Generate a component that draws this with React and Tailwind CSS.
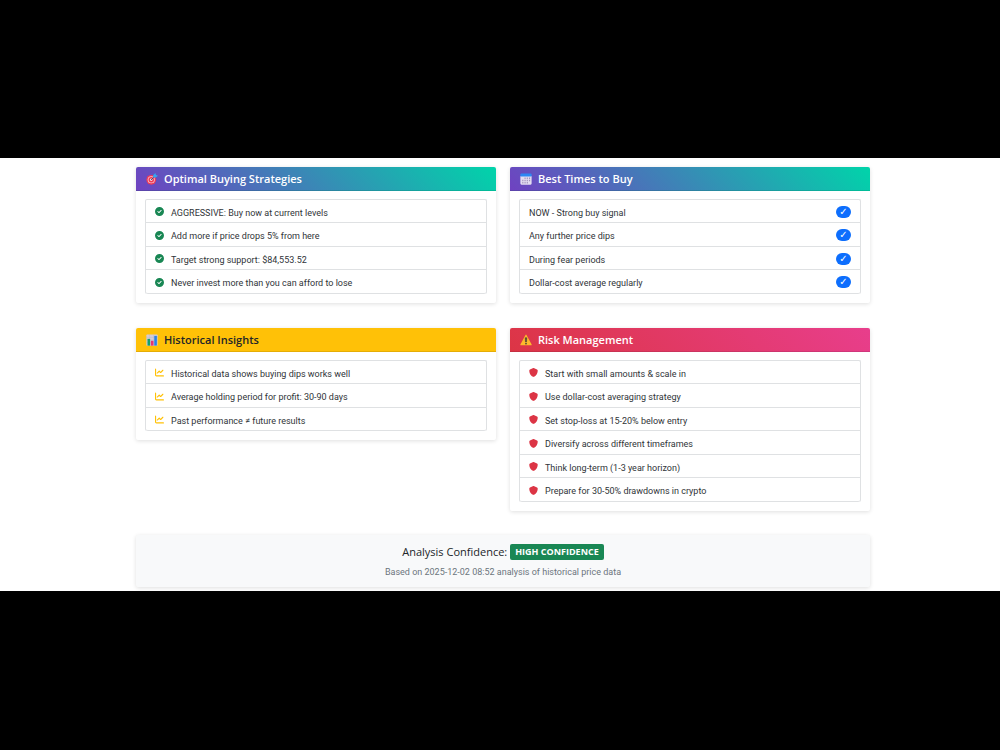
import React from "react";
import { FaCircleCheck, FaChartLine, FaShield } from "react-icons/fa6";

function TargetIcon() {
  return (
    <svg viewBox="0 0 32 32" className="size-3 shrink-0" aria-hidden="true">
      <circle cx="14" cy="18" r="13" fill="#f03a55" />
      <circle cx="14" cy="18" r="9.5" fill="#f7c9d8" />
      <circle cx="14" cy="18" r="7.500" fill="#f03a55" />
      <circle cx="14" cy="18" r="3.4" fill="#f7d9e4" />
      <path d="M14 18 24 8" stroke="#31507c" strokeWidth="2.4" strokeLinecap="round" />
      <path d="M19 12V6l6-6 1.500 5L32 7l-6 5h-7z" fill="#35a5f2" />
    </svg>
  );
}

function CalendarIcon() {
  return (
    <svg viewBox="0 0 32 32" className="size-3 shrink-0" aria-hidden="true">
      <path d="M1 8h30v20a3 3 0 0 1-3 3H4a3 3 0 0 1-3-3z" fill="#e3dcf0" />
      <path d="M4 1h24a3 3 0 0 1 3 3v5H1V4a3 3 0 0 1 3-3z" fill="#2d87f3" />
      <path
        d="M12 12h3v4h-3zM18 12h3v4h-3zM24 12h3v4h-3zM6 18h3v4H6zM12 18h3v4h-3zM18 18h3v4h-3zM24 18h3v4h-3zM6 24h3v4H6zM12 24h3v4h-3zM18 24h3v4h-3z"
        fill="#a392bd"
      />
    </svg>
  );
}

function BarsIcon() {
  return (
    <svg viewBox="0 0 32 32" className="size-3 shrink-0" aria-hidden="true">
      <rect x="1" y="1" width="30" height="30" rx="2" fill="#d3ccd6" />
      <path d="M1 9h30M1 16h30M1 23h30M9 1v30M20 1v30" stroke="#bdb3c2" strokeWidth="1" />
      <rect x="4" y="13" width="7" height="18" fill="#12a06b" />
      <rect x="13" y="18" width="7" height="13" fill="#e8366f" />
      <rect x="22" y="5" width="7" height="26" fill="#2a82e4" />
    </svg>
  );
}

function WarningIcon() {
  return (
    <svg viewBox="0 0 32 32" className="size-3 shrink-0" aria-hidden="true">
      <path d="M14.3 3a2 2 0 0 1 3.4 0l13 24.200a2 2 0 0 1-1.700 3H3a2 2 0 0 1-1.700-3z" fill="#fdb92c" />
      <path d="M14 10h4l-.6 11h-2.800z" fill="#4a4038" stroke="#4a4038" strokeWidth="1.500" strokeLinejoin="round" />
      <circle cx="16" cy="25.500" r="2.300" fill="#4a4038" />
    </svg>
  );
}

function Card({ title, icon, headerClass, children }) {
  return (
    <section className="overflow-hidden rounded-xs bg-white shadow-[0_1px_4px_rgba(0,0,0,0.13)]">
      <h2
        className={
          "flex h-6 items-center gap-[6px] border-b border-black/10 px-[10px] pt-px text-[11px] font-semibold " +
          headerClass
        }
      >
        {icon}
        {title}
      </h2>
      <div className="px-[9px] pt-2 pb-[9px]">
        <ul className="rounded-xs border-x border-t border-[#dfe1e3]">{children}</ul>
      </div>
    </section>
  );
}

function Row({ icon, text, badge }) {
  return (
    <li className="flex h-[23px] items-center gap-[7px] border-b border-[#dfe1e3] px-[9px] pt-px text-[#303438] last:rounded-b-xs even:h-6">
      {icon}
      <span className="grow pt-[2px] font-['Roboto','DejaVu_Sans',sans-serif] text-[9px] leading-3">{text}</span>
      {badge}
    </li>
  );
}

const strategies = [
  "AGGRESSIVE: Buy now at current levels",
  "Add more if price drops 5% from here",
  "Target strong support: $84,553.52",
  "Never invest more than you can afford to lose",
];
const times = ["NOW - Strong buy signal", "Any further price dips", "During fear periods", "Dollar-cost average regularly"];
const insights = [
  "Historical data shows buying dips works well",
  "Average holding period for profit: 30-90 days",
  "Past performance ≠ future results",
];
const risks = [
  "Start with small amounts & scale in",
  "Use dollar-cost averaging strategy",
  "Set stop-loss at 15-20% below entry",
  "Diversify across different timeframes",
  "Think long-term (1-3 year horizon)",
  "Prepare for 30-50% drawdowns in crypto",
];

export default function App() {
  return (
    <div className="min-h-screen bg-black py-[158px] font-['Open_Sans','DejaVu_Sans',sans-serif]">
      <main className="bg-white pt-[9px] pr-0 pb-1 pl-[6px]">
        <div className="mx-auto w-full max-w-[734px]">
          <div className="grid grid-cols-2 items-start gap-x-[14px] gap-y-[25px]">
            <Card
              title="Optimal Buying Strategies"
              icon={<TargetIcon />}
              headerClass="bg-[linear-gradient(45deg,#6f42c1,#00d4aa)] text-white"
            >
              {strategies.map((text) => (
                <Row key={text} text={text} icon={<FaCircleCheck className="size-[9px] shrink-0 text-[#198754]" />} />
              ))}
            </Card>
            <Card
              title="Best Times to Buy"
              icon={<CalendarIcon />}
              headerClass="bg-[linear-gradient(45deg,#6f42c1,#00d4aa)] text-white"
            >
              {times.map((text) => (
                <Row
                  key={text}
                  text={text}
                  badge={
                    <span className="flex h-3 w-[15px] items-center justify-center rounded-full bg-[#0d6efd] font-['DejaVu_Sans',sans-serif] text-[10px] leading-3 font-bold text-white">
                      ✓
                    </span>
                  }
                />
              ))}
            </Card>
            <Card title="Historical Insights" icon={<BarsIcon />} headerClass="bg-[#ffc107] text-[#212529]">
              {insights.map((text) => (
                <Row key={text} text={text} icon={<FaChartLine className="size-[9px] shrink-0 text-[#ffc107]" />} />
              ))}
            </Card>
            <Card
              title="Risk Management"
              icon={<WarningIcon />}
              headerClass="bg-[linear-gradient(45deg,#dc3545,#e83e8c)] text-white"
            >
              {risks.map((text) => (
                <Row key={text} text={text} icon={<FaShield className="size-[9px] shrink-0 text-[#dc3545]" />} />
              ))}
            </Card>
          </div>
          <footer className="mt-6 flex flex-col items-center gap-1 rounded-xs bg-[#f8f9fa] pt-[9px] pb-[7px] shadow-[0_1px_4px_rgba(0,0,0,0.13)]">
            <h2 className="flex items-center gap-[3px] text-[11px] leading-4 font-medium text-[#212529]">
              Analysis Confidence:
              <span className="rounded-xs bg-[#198754] px-[5px] text-[9px] leading-4 font-bold text-white">
                HIGH CONFIDENCE
              </span>
            </h2>
            <p className="font-['Roboto','DejaVu_Sans',sans-serif] text-[9px] leading-4 text-[#6c757d]">
              Based on 2025-12-02 08:52 analysis of historical price data
            </p>
          </footer>
        </div>
      </main>
    </div>
  );
}
